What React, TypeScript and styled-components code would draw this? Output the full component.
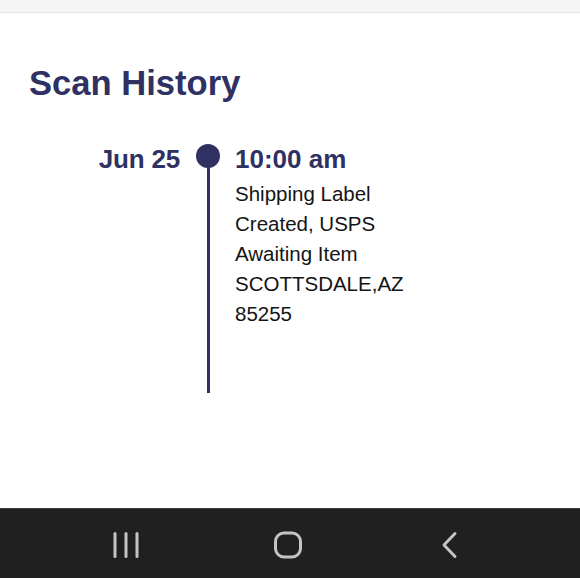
import React from "react";
import styled, { createGlobalStyle } from "styled-components";

const GlobalStyle = createGlobalStyle`
  html, body { margin: 0; padding: 0; background: #ffffff; }
  body { font-family: "Liberation Sans", Arial, sans-serif; }
  * { box-sizing: border-box; }
`;

const Screen = styled.div`
  width: 580px;
  height: 578px;
  display: flex;
  flex-direction: column;
  overflow: hidden;
  background: #ffffff;
`;

const StatusStrip = styled.div`
  height: 13px;
  flex: none;
  background: #f5f5f5;
  border-bottom: 1px solid #e4e4e4;
`;

const Content = styled.main`
  flex: 1;
  padding: 51px 0 0 29px;
`;

const Title = styled.h1`
  margin: 0;
  font-size: 34.6px;
  font-weight: 700;
  color: #2f3163;
  line-height: 39px;
`;

const Timeline = styled.div`
  margin-top: 41px;
  display: grid;
  grid-template-columns: 151px 24px 1fr;
  column-gap: 16px;
`;

const DateLabel = styled.div`
  text-align: right;
  font-size: 26px;
  font-weight: 700;
  color: #2f3163;
  line-height: 30px;
  letter-spacing: -0.2px;
`;

const Track = styled.div`
  display: flex;
  flex-direction: column;
  align-items: center;
`;

const Dot = styled.div`
  width: 24px;
  height: 24px;
  border-radius: 50%;
  background: #2f3163;
  flex: none;
`;

const Line = styled.div<{ $length: number }>`
  width: 3px;
  height: ${(p) => p.$length}px;
  margin-top: -2px;
  background: #2f3163;
`;

const Entry = styled.div`
  width: 180px;
  margin-left: -1px;
`;

const Time = styled.div`
  font-size: 26px;
  font-weight: 700;
  color: #2f3163;
  line-height: 30px;
`;

const Description = styled.div`
  margin-top: 5px;
  font-size: 20.5px;
  line-height: 30px;
  color: #141414;
`;

const NavBar = styled.nav`
  height: 70px;
  flex: none;
  background: #202020;
  border-top: 1px solid #3c3c3c;
  display: grid;
  grid-template-columns: repeat(3, 162px);
  justify-content: center;
  align-items: center;
  padding-right: 5px;
  padding-top: 2px;
`;

const NavButton = styled.div`
  display: flex;
  justify-content: center;
  align-items: center;
  color: #c4c4c4;
`;

const RecentsIcon = () => (
  <svg width="28" height="28" viewBox="0 0 28 28" fill="none">
    <g stroke="currentColor" strokeWidth="3" strokeLinecap="round">
      <line x1="3" y1="2.5" x2="3" y2="25.5" />
      <line x1="14" y1="2.5" x2="14" y2="25.5" />
      <line x1="25" y1="2.5" x2="25" y2="25.5" />
    </g>
  </svg>
);

const HomeIcon = () => (
  <svg width="30" height="28" viewBox="0 0 30 28" fill="none">
    <rect x="2.5" y="2" width="25" height="24" rx="8.5" stroke="currentColor" strokeWidth="3" />
  </svg>
);

const BackIcon = () => (
  <svg width="20" height="28" viewBox="0 0 20 28" fill="none">
    <polyline
      points="15,2.5 4,14 15,25.5"
      stroke="currentColor"
      strokeWidth="3"
      strokeLinecap="round"
      strokeLinejoin="round"
    />
  </svg>
);

export default function App() {
  return (
    <>
      <GlobalStyle />
      <Screen>
        <StatusStrip />
        <Content>
          <Title>Scan History</Title>
          <Timeline>
            <DateLabel>Jun 25</DateLabel>
            <Track>
              <Dot />
              <Line $length={227} />
            </Track>
            <Entry>
              <Time>10:00 am</Time>
              <Description>
                Shipping Label Created, USPS Awaiting Item SCOTTSDALE,AZ 85255
              </Description>
            </Entry>
          </Timeline>
        </Content>
        <NavBar>
          <NavButton>
            <RecentsIcon />
          </NavButton>
          <NavButton>
            <HomeIcon />
          </NavButton>
          <NavButton>
            <BackIcon />
          </NavButton>
        </NavBar>
      </Screen>
    </>
  );
}
